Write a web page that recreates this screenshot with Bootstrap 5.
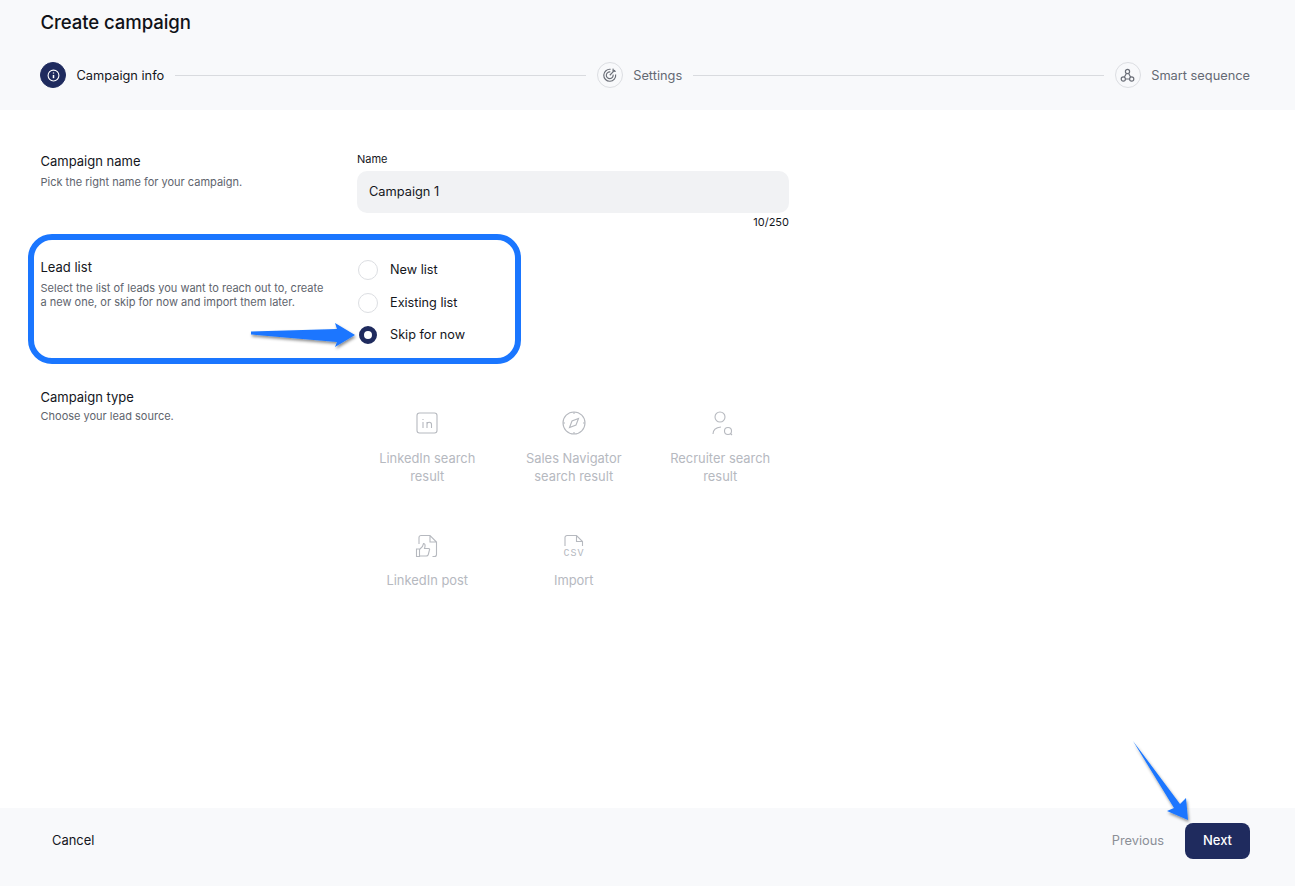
<!DOCTYPE html>
<html lang="en">
<head>
<meta charset="utf-8">
<title>Create campaign</title>
<link href="https://cdn.jsdelivr.net/npm/bootstrap@5.3.0/dist/css/bootstrap.min.css" rel="stylesheet">
<style>
html,body{height:100%}
body{font-family:"Inter",sans-serif;color:#14161c;background:#fff;height:886px;position:relative;overflow:hidden}
.top-band{background:#f8f9fb;height:110px;padding:11px 45px 0 40px}
.page-title{font-size:18.6px;font-weight:500;line-height:22px;margin:0 0 0 .5px;color:#101218;letter-spacing:-.1px}
.stepper{margin-top:29px;height:26px}
.step-dot{width:26px;height:26px;border-radius:50%;border:1px solid #dcdee2;flex:none;color:#6b6f78}
.step-dot.on{background:#1f2b5e;border-color:#1f2b5e;color:#fff}
.step-text{font-size:12.8px;color:#646973;margin-left:10.500px;padding-top:1px;white-space:nowrap;font-weight:400}
.step-text.on{color:#14161c}
.step-line{height:1px;background:#d9dbdf;flex:1 1 0;margin:0 10.500px}
.form-area{flex:1 1 auto;padding:0 0 0 40.5px}
.form-row-grid{display:grid;grid-template-columns:316.5px 432px}
.sect-title{font-size:13px;font-weight:400;line-height:16px;color:#14161c;margin:0}
.sect-desc{font-size:11px;line-height:14px;color:#60646d;margin:5.500px 0 0}
.name-label{font-size:11px;line-height:14px;display:block;margin:0 0 5px}
.name-input{background:#f1f2f4;border:0;border-radius:10px;height:42px;font-size:12.8px;padding:0 12px 2px;color:#14161c}
.name-count{font-size:11px;line-height:14px;text-align:right;margin-top:2px}
.radio-stack{margin-top:1px}
.radio-line{height:33px;margin:0;padding:0;display:flex;align-items:center;font-size:12.7px}
.radio-line .form-check-input{width:20px;height:20px;margin:0 12px 0 1px;border:1px solid #dcdee2;flex:none}
.radio-line .form-check-input:checked{background-color:#fff;border:5px solid #1f2b5e;background-image:none;width:18px;height:18px;margin:0 13px 0 2px}
.skip-line{margin-top:-.5px}
.tile-grid{display:grid;grid-template-columns:repeat(3,146.5px);margin:22px 0 0 -3px;row-gap:48px}
.type-tile{text-align:center;color:#b6b9bf;font-size:12.9px;line-height:18px}
.type-tile svg{display:block;margin:0 auto 15px;color:#b6b9bf;overflow:visible}
.type-tile.low-tile svg{margin-bottom:14px}
.csv-mark{font-family:"Liberation Mono",monospace;font-size:10px;fill:currentColor;stroke:none;letter-spacing:1px}
.bottom-band{background:#f8f9fb;height:78px;padding:0 45px 12px 52px}
.cancel-link{font-size:12.9px;color:#14161c;padding:0;border:0}
.prev-btn{font-size:12.8px;color:#8b8f97;padding:0;border:0;background:none;margin-right:21px}
.next-btn{background:#1f2b5e;color:#fff;border:0;border-radius:8px;width:65px;height:36px;font-size:13px;font-weight:500;padding:0}
.callout{position:absolute;left:28px;top:234px;width:493px;height:130px;border:6px solid #1a76ff;border-radius:24px;pointer-events:none}
.arrow-mark{position:absolute;left:0;top:0;pointer-events:none;overflow:visible}
</style>
</head>
<body class="d-flex flex-column">
<header class="top-band">
  <h1 class="page-title">Create campaign</h1>
  <div class="stepper d-flex align-items-center">
    <span class="step-dot on d-flex align-items-center justify-content-center">
      <svg width="13" height="13" viewBox="0 0 12 12" fill="none" stroke="currentColor"><circle cx="6" cy="6" r="5"/><path d="M6 5.500v3" stroke-width="1.400"/><path d="M6 3.200v1" stroke-width="1.200"/></svg>
    </span>
    <span class="step-text on">Campaign info</span>
    <span class="step-line"></span>
    <span class="step-dot d-flex align-items-center justify-content-center">
      <svg width="16" height="16" viewBox="0 0 15 15" fill="none" stroke="currentColor" stroke-width="1.100"><path d="M8 2.200A5.600 5.600 0 1 0 12.800 7"/><path d="M7.800 4.600A3.200 3.200 0 1 0 10.400 7.200"/><path d="M7.300 7.700 12 3M10.500 1.500l-.2 2.700 2.700-.2"/></svg>
    </span>
    <span class="step-text">Settings</span>
    <span class="step-line"></span>
    <span class="step-dot d-flex align-items-center justify-content-center">
      <svg width="15" height="15" viewBox="0 0 15 15" fill="none" stroke="currentColor" stroke-width="1.200"><circle cx="7.500" cy="3.500" r="2.100"/><circle cx="3.300" cy="11" r="2.100"/><circle cx="11.700" cy="11" r="2.100"/><path d="M6.500 5.300 4.300 9.200M8.500 5.300l2.200 3.900M5.300 11h4.400"/></svg>
    </span>
    <span class="step-text">Smart sequence</span>
  </div>
</header>

<main class="form-area d-flex flex-column">
  <section class="form-row-grid" style="padding-top:43px">
    <div>
      <h2 class="sect-title">Campaign name</h2>
      <p class="sect-desc">Pick the right name for your campaign.</p>
    </div>
    <div style="margin-top:-1px">
      <label class="name-label" for="campName">Name</label>
      <input id="campName" class="form-control name-input" value="Campaign 1">
      <div class="name-count">10/250</div>
    </div>
  </section>

  <section class="form-row-grid" style="padding-top:23px">
    <div style="padding-top:7px">
      <h2 class="sect-title">Lead list</h2>
      <p class="sect-desc">Select the list of leads you want to reach out to, create<br>a new one, or skip for now and import them later.</p>
    </div>
    <div class="radio-stack">
      <label class="radio-line"><input class="form-check-input" type="radio" name="lead">New list</label>
      <label class="radio-line"><input class="form-check-input" type="radio" name="lead">Existing list</label>
      <label class="radio-line skip-line"><input class="form-check-input" type="radio" name="lead" checked>Skip for now</label>
    </div>
  </section>

  <section class="form-row-grid" style="padding-top:37px">
    <div>
      <h2 class="sect-title">Campaign type</h2>
      <p class="sect-desc" style="margin-top:4.500px">Choose your lead source.</p>
    </div>
    <div class="tile-grid">
      <div class="type-tile">
        <svg width="24" height="24" viewBox="0 0 24 24" fill="none" stroke="currentColor" stroke-width="1.100"><rect x="2" y="2" width="20" height="20" rx="2.500"/><path d="M8 11v6M8 8v1M12 17v-6M12 13.500c0-3 4.500-3 4.500 0V17"/></svg>
        LinkedIn search<br>result
      </div>
      <div class="type-tile">
        <svg width="24" height="24" viewBox="0 0 24 24" fill="none" stroke="currentColor" stroke-width="1.100"><circle cx="12" cy="12" r="11"/><path d="M16.500 7.500 14 14l-6.500 2.500L10 10z"/><path d="M12 1v2M12 21v2M1 12h2M21 12h2"/></svg>
        Sales Navigator<br>search result
      </div>
      <div class="type-tile">
        <svg width="24" height="24" viewBox="0 0 24 24" fill="none" stroke="currentColor" stroke-width="1.100"><circle cx="12" cy="6" r="5"/><path d="M5 23c0-4 3-6.500 8-7"/><circle cx="20" cy="20" r="3.500"/><path d="m22.500 22.500 1.500 1.500"/></svg>
        Recruiter search<br>result
      </div>
      <div class="type-tile low-tile">
        <svg width="24" height="24" viewBox="0 0 24 24" fill="none" stroke="currentColor" stroke-width="1.100"><path d="M4 10V3.500A2 2 0 0 1 6 1.500h9l6.500 6.500v12.500a2 2 0 0 1-2 2h-2M15 1.500V8h6.500"/><path d="M1.500 15h3v7.500h-3zM4.500 15.500l3-3 1-3c1.800 0 2 2 1 5h4c1.500 0 1.200 1.500.8 2l-1 4c-.3 1-1 1.500-2 1.500H4.500"/></svg>
        LinkedIn post
      </div>
      <div class="type-tile low-tile">
        <svg width="24" height="24" viewBox="0 0 24 24" fill="none" stroke="currentColor" stroke-width="1.100"><path d="M3 12V3.500A2 2 0 0 1 5 1.500h9.500l6 6V12M14.500 1.500V7.500h6"/><text class="csv-mark" x="1.500" y="21.500">CSV</text></svg>
        Import
      </div>
    </div>
  </section>
</main>

<footer class="bottom-band d-flex align-items-center justify-content-between">
  <button class="btn cancel-link" type="button">Cancel</button>
  <div class="d-flex align-items-center">
    <button class="btn prev-btn" type="button">Previous</button>
    <button class="btn next-btn" type="button">Next</button>
  </div>
</footer>

<div class="callout"></div>
<svg class="arrow-mark" width="1295" height="886" viewBox="0 0 1295 886">
  <defs><filter id="sh" x="-20%" y="-20%" width="140%" height="140%"><feDropShadow dx="1" dy="2" stdDeviation="1.500" flood-color="#000" flood-opacity=".45"/></filter></defs>
  <path d="M251 331.500 337 329 335 323 355 335 335 347 337 342 251 334.500Z" fill="#1a76ff" filter="url(#sh)"/>
  <path d="M1133 741 1180 804 1186 798 1188 820 1167 811 1174 808Z" fill="#1a76ff" filter="url(#sh)"/>
</svg>
<script src="https://cdn.jsdelivr.net/npm/bootstrap@5.3.0/dist/js/bootstrap.bundle.min.js"></script>
</body>
</html>
